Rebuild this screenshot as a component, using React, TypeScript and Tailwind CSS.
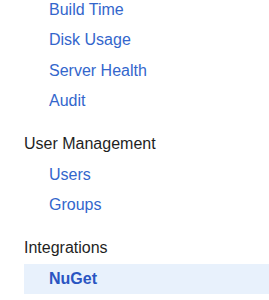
import React from 'react';

const sections: { title?: string; items: string[] }[] = [
  { items: ['Build Time', 'Disk Usage', 'Server Health', 'Audit'] },
  { title: 'User Management', items: ['Users', 'Groups'] },
  { title: 'Integrations', items: ['NuGet'] },
];

const active = 'NuGet';

export default function App() {
  return (
    <div className="w-[269px] h-[300px] overflow-hidden bg-white font-['Liberation_Sans',Arial,sans-serif] text-[16px]">
      <div className="-mt-[5.5px] pl-[24px]">
        {sections.map((s, i) => (
          <div key={i} className={i > 0 ? 'mt-[12.5px]' : ''}>
            {s.title && <div className="h-[30.5px] leading-[30.5px] text-[#1f1f1f]">{s.title}</div>}
            {s.items.map((item) => (
              <a
                key={item}
                href="#"
                className={`block h-[30.5px] leading-[30.5px] pl-[25px] ${
                  item === active ? 'bg-[#e8f1fc] font-bold text-[#2a55c2]' : 'text-[#3366cc]'
                }`}
              >
                {item}
              </a>
            ))}
          </div>
        ))}
      </div>
    </div>
  );
}
